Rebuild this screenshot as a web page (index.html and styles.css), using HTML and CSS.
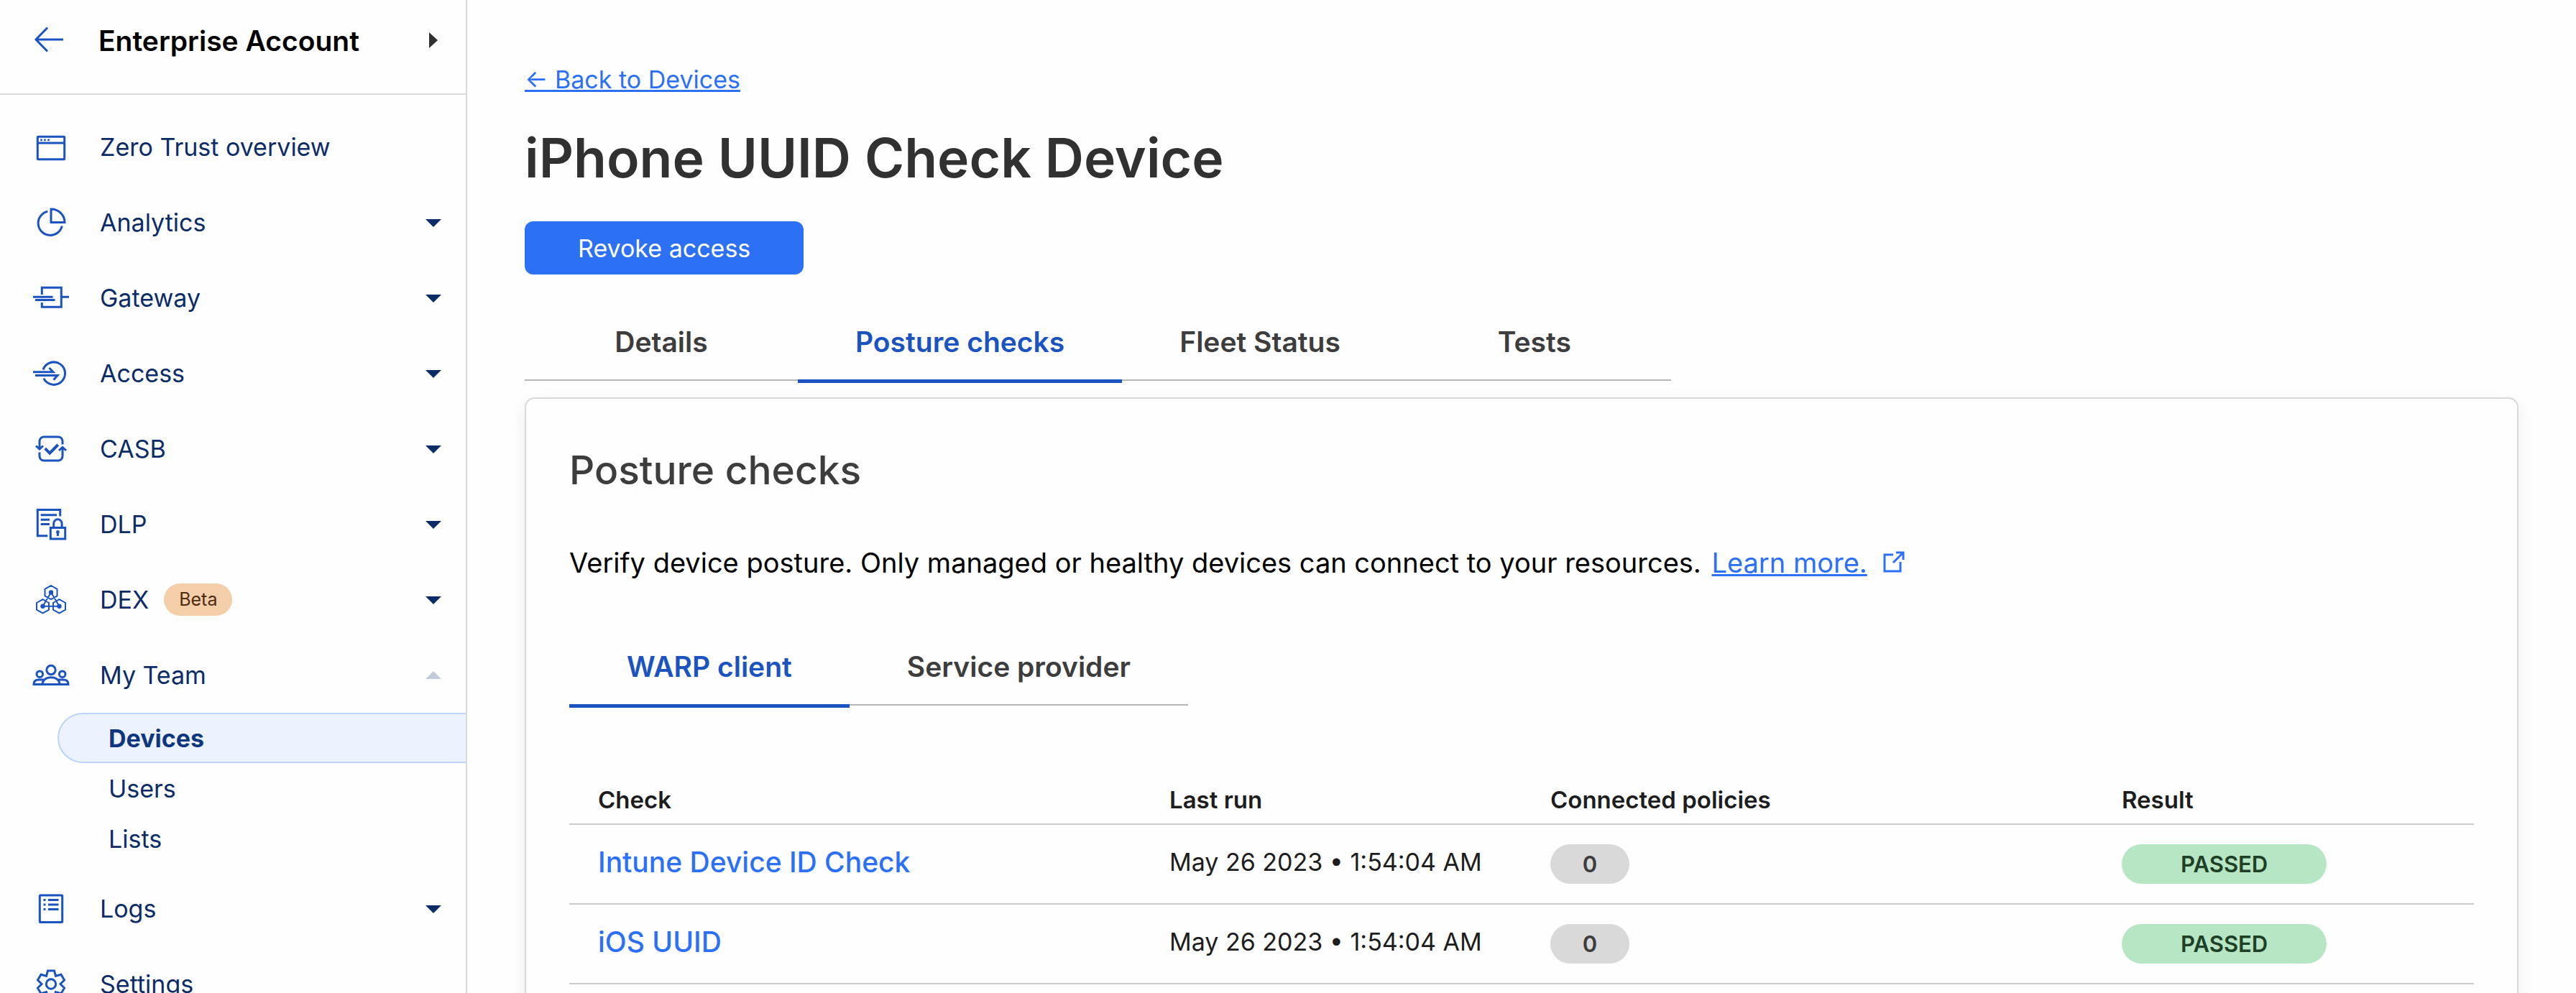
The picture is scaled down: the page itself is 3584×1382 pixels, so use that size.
FILE: index.html
```html
<!DOCTYPE html>
<html lang="en">
<head>
    <meta charset="UTF-8">
    <meta name="viewport" content="width=device-width, initial-scale=1.0">
    <title>iPhone UUID Check Device</title>
    <link rel="stylesheet" href="styles.css">
</head>
<body>
    <div class="app">
        <!-- Sidebar -->
        <aside class="sidebar">
            <div class="account">
                <a href="#" class="account-back" aria-label="Back">
                    <svg class="icon" viewBox="0 0 52 52"><path d="M43 25H5M21 8.500L5 25l16 16.500"/></svg>
                </a>
                <button type="button" class="account-name">
                    <span>Enterprise Account</span>
                    <svg class="caret caret-right" viewBox="0 0 22 22"><path d="M5 0l12 11L5 22z"/></svg>
                </button>
            </div>

            <nav class="menu">
                <a href="#" class="menu-item">
                    <svg class="icon" viewBox="0 0 52 52"><rect x="7.300" y="11.300" width="37.400" height="31.400" rx="1"/><path d="M7 20h38"/><g class="solid"><circle cx="12.500" cy="15.800" r="1.500"/><circle cx="17.500" cy="15.800" r="1.500"/><circle cx="22.500" cy="15.800" r="1.500"/></g></svg>
                    <span>Zero Trust overview</span>
                </a>
                <button type="button" class="menu-item">
                    <svg class="icon" viewBox="0 0 52 52"><path d="M21.300 10.200A16.800 16.800 0 1 0 41.300 30.500"/><path d="M26 7v18.500h19A19 18.500 0 0 0 26 7z"/></svg>
                    <span>Analytics</span>
                    <svg class="caret" viewBox="0 0 22 22"><path d="M0 6h22L11 17z"/></svg>
                </button>
                <button type="button" class="menu-item">
                    <svg class="icon" viewBox="0 0 52 52"><path d="M13.300 21V11.300h27v27h-27V32M1 24.300h27.500M4 28.500h27.500M40.300 24.300H51"/></svg>
                    <span>Gateway</span>
                    <svg class="caret" viewBox="0 0 22 22"><path d="M0 6h22L11 17z"/></svg>
                </button>
                <button type="button" class="menu-item">
                    <svg class="icon" viewBox="0 0 52 52"><path d="M15 20.500A15.700 15.700 0 1 1 15.800 32.700"/><path d="M1 23.800h28L23.500 18M4 28.500h31l-5.500 6.300"/></svg>
                    <span>Access</span>
                    <svg class="caret" viewBox="0 0 22 22"><path d="M0 6h22L11 17z"/></svg>
                </button>
                <button type="button" class="menu-item">
                    <svg class="icon" viewBox="0 0 52 52"><path d="M10 25V15a6 6 0 0 1 6-6h20a6 6 0 0 1 6 6v4.500M5 21.500l5 4.500 5-4.500M10 30.500V36a6 6 0 0 0 6 6h20a6 6 0 0 0 6-6V24.500M37 28l5-4.500 5 4.500"/><path class="thick" d="M17.700 25.200l6.500 6.500L35.700 20"/></svg>
                    <span>CASB</span>
                    <svg class="caret" viewBox="0 0 22 22"><path d="M0 6h22L11 17z"/></svg>
                </button>
                <button type="button" class="menu-item">
                    <svg class="icon" viewBox="0 0 52 52"><path d="M38.700 14.500V5.500H7.300v36.300h14M11.700 12.800H34M11.700 19.200H24M11.700 25.500H24"/><rect x="25.300" y="30.500" width="20.400" height="15.500"/><path d="M29.700 30v-5.500a5.700 5.700 0 0 1 11.400 0V30M35.400 36.500v5.500"/><circle class="solid" cx="35.400" cy="36.500" r="2.400"/></svg>
                    <span>DLP</span>
                    <svg class="caret" viewBox="0 0 22 22"><path d="M0 6h22L11 17z"/></svg>
                </button>
                <button type="button" class="menu-item">
                    <svg class="icon" viewBox="0 0 52 52"><path class="thin" d="M26 6l8.500 4.800v9.600L26 25.200l-8.500-4.800v-9.600zM14.500 25.200l8.500 4.800v9.600l-8.500 4.800L6 39.600V30zM37.500 25.200l8.500 4.800v9.600l-8.500 4.800-8.500-4.800V30zM26 15.500L14.500 34.800h23z"/><g class="solid"><circle cx="26" cy="15.500" r="3.200"/><circle cx="14.500" cy="34.800" r="3.200"/><circle cx="37.500" cy="34.800" r="3.200"/></g></svg>
                    <span>DEX</span>
                    <span class="beta">Beta</span>
                    <svg class="caret" viewBox="0 0 22 22"><path d="M0 6h22L11 17z"/></svg>
                </button>
                <button type="button" class="menu-item" aria-expanded="true">
                    <svg class="icon" viewBox="0 0 52 52"><circle cx="26" cy="18.500" r="6.200"/><circle cx="10.300" cy="24.200" r="4.300"/><circle cx="41.700" cy="24.200" r="4.300"/><path d="M14 38.500c0-6 5-9.800 12-9.800s12 3.800 12 9.800M18 32H9c-4.500 0-7 2.500-7 6.500h48c0-4-2.500-6.500-7-6.500h-9"/></svg>
                    <span>My Team</span>
                    <svg class="caret caret-open" viewBox="0 0 22 22"><path d="M0 16h22L11 5z"/></svg>
                </button>
                <ul class="submenu">
                    <li><a href="#" class="active">Devices</a></li>
                    <li><a href="#">Users</a></li>
                    <li><a href="#">Lists</a></li>
                </ul>
                <button type="button" class="menu-item">
                    <svg class="icon" viewBox="0 0 52 52"><rect x="10.300" y="7" width="31.400" height="37.500" rx="1"/><path d="M22 13.500h14.500M22 20h14.500M22 26.500h14.500M15.500 13.500h3M15.500 20h3M15.500 26.500h3"/></svg>
                    <span>Logs</span>
                    <svg class="caret" viewBox="0 0 22 22"><path d="M0 6h22L11 17z"/></svg>
                </button>
                <a href="#" class="menu-item">
                    <svg class="icon" viewBox="0 0 52 52"><path d="M21.500 7h9l2 7.500 7.500-2.200 4.500 7.800L39 25.500l5.500 5.500-4.500 7.800-7.500-2.200-2 7.400h-9l-2-7.400-7.500 2.200L7.500 31l5.500-5.500-5.500-5.400 4.500-7.800 7.500 2.200z"/><circle cx="26" cy="25.500" r="6.700"/></svg>
                    <span>Settings</span>
                </a>
            </nav>
        </aside>

        <!-- Device page -->
        <main class="main">
            <a href="#" class="back-link">← Back to Devices</a>
            <h1>iPhone UUID Check Device</h1>
            <button type="button" class="revoke">Revoke access</button>

            <div class="tabs" role="tablist">
                <button type="button" role="tab" class="tab">Details</button>
                <button type="button" role="tab" class="tab active" aria-selected="true">Posture checks</button>
                <button type="button" role="tab" class="tab">Fleet Status</button>
                <button type="button" role="tab" class="tab">Tests</button>
            </div>

            <section class="card">
                <h2>Posture checks</h2>
                <p class="intro">
                    Verify device posture. Only managed or healthy devices can connect to your resources.
                    <a href="#">Learn more.</a>
                    <svg class="external" viewBox="0 0 30 30"><path d="M14 5H2v23h22V15M18 2h10v10M28 2L14 16"/></svg>
                </p>

                <div class="tabs tabs-fit" role="tablist">
                    <button type="button" role="tab" class="tab active" aria-selected="true">WARP client</button>
                    <button type="button" role="tab" class="tab">Service provider</button>
                </div>

                <table class="checks">
                    <thead>
                        <tr>
                            <th class="col-check">Check</th>
                            <th class="col-run">Last run</th>
                            <th class="col-policies">Connected policies</th>
                            <th>Result</th>
                        </tr>
                    </thead>
                    <tbody>
                        <tr>
                            <td><a href="#">Intune Device ID Check</a></td>
                            <td>May 26 2023 • 1:54:04 AM</td>
                            <td><span class="pill">0</span></td>
                            <td><span class="pill passed">PASSED</span></td>
                        </tr>
                        <tr>
                            <td><a href="#">iOS UUID</a></td>
                            <td>May 26 2023 • 1:54:04 AM</td>
                            <td><span class="pill">0</span></td>
                            <td><span class="pill passed">PASSED</span></td>
                        </tr>
                    </tbody>
                </table>
            </section>
        </main>
    </div>
</body>
</html>
```
FILE: styles.css
```css
* {
    margin: 0;
    padding: 0;
    box-sizing: border-box;
}

body {
    font-family: Inter, "Liberation Sans", sans-serif;
    font-size: 34px;
    color: #1d1d1d;
    background-color: #fefefe;
}
button {
    font: inherit;
    color: inherit;
    background: none;
    border: none;
    cursor: pointer;
}
a {
    color: #2c70f6;
}

.app {
    display: flex;
    height: 100vh;
    overflow: hidden;
}

/* Sidebar */
.sidebar {
    flex: 0 0 650px;
    border-right: 2px solid #d9d9d9;
    color: #0c2c67;
}
.account {
    display: flex;
    align-items: center;
    height: 132px;
    padding: 0 34px 18px 45px;
    border-bottom: 2px solid #d9d9d9;
}
.account-back {
    display: flex;
}
.account-name {
    flex: 1;
    display: flex;
    align-items: center;
    justify-content: space-between;
    margin-left: 40px;
    font-size: 39px;
    font-weight: 600;
    color: #000;
}
.menu {
    padding-top: 20px;
}
.menu-item {
    display: flex;
    align-items: center;
    width: 100%;
    height: 105px;
    padding: 0 34px 0 45px;
    color: #0c2c67;
    text-decoration: none;
}
.menu-item .icon {
    margin-right: 42px;
}
.icon {
    flex: none;
    width: 52px;
    height: 52px;
    fill: none;
    stroke: #1b53bf;
    stroke-width: 3;
}
.icon .solid {
    fill: #1b53bf;
    stroke: none;
}
.icon .thin {
    stroke-width: 2;
}
.icon .thick {
    stroke-width: 4;
}
.caret {
    width: 22px;
    height: 22px;
    margin-left: auto;
    fill: #0c2c67;
}
.caret-right {
    fill: #313131;
}
.caret-open {
    fill: #c3cad9;
}
.beta {
    margin-left: 21px;
    padding: 0 21px;
    border-radius: 23px;
    background-color: #f4cda9;
    color: #4e2b10;
    font-size: 25px;
    line-height: 45px;
}
.submenu {
    list-style: none;
    padding: 0 0 10px 80px;
}
.submenu a {
    display: block;
    height: 70px;
    padding-left: 69px;
    border: 2px solid transparent;
    border-right: none;
    line-height: 68px;
    color: #0c2c67;
    text-decoration: none;
}
.submenu a.active {
    border-color: #bcd4fb;
    border-radius: 35px 0 0 35px;
    background-color: #ecf3fe;
    color: #0f3780;
    font-weight: 700;
}

/* Main */
.main {
    flex: 1;
    display: flex;
    flex-direction: column;
    align-items: flex-start;
    padding: 88px 80px 0;
}
.main > * {
    flex-shrink: 0;
}
.back-link {
    line-height: 46px;
}
h1 {
    margin: 38px 0 40px;
    font-size: 75px;
    font-weight: 600;
    line-height: 96px;
    color: #313131;
}
.revoke {
    height: 74px;
    padding: 0 74px;
    border-radius: 12px;
    background-color: #2c70f6;
    color: #fff;
}

/* Tabs */
.tabs {
    display: flex;
    margin: 42px 0 23px;
    border-bottom: 2px solid #b6b6b6;
}
.tab {
    min-width: 380px;
    margin-bottom: -5px;
    padding: 26px 80px;
    border-bottom: 5px solid transparent;
    font-size: 39px;
    font-weight: 600;
    line-height: 52px;
    color: #3d3d3d;
}
.tab.active {
    border-color: #1b53bf;
    color: #1b53bf;
}
.tabs-fit {
    width: fit-content;
    margin: 63px 0 98px;
}

/* Card */
.card {
    align-self: stretch;
    padding: 64px 60px;
    border: 2px solid #d9d9d9;
    border-radius: 14px;
    background-color: #fefefe;
    box-shadow: 0 8px 24px rgba(0, 0, 0, 0.07);
}
h2 {
    font-size: 55px;
    font-weight: 500;
    line-height: 70px;
    color: #3d3d3d;
}
.intro {
    margin-top: 64px;
    font-size: 38px;
    line-height: 60px;
    color: #000;
}
.intro a {
    margin-left: 4px;
}
.external {
    width: 30px;
    height: 30px;
    margin-left: 12px;
    fill: none;
    stroke: #2c70f6;
    stroke-width: 3;
}

/* Table */
.checks {
    width: 100%;
    table-layout: fixed;
    border-spacing: 0;
}
.checks th,
.checks td {
    padding: 0 40px;
    border-bottom: 2px solid #cbcbcb;
    text-align: left;
}
.checks th {
    height: 68px;
    font-size: 33px;
    font-weight: 600;
}
.checks td {
    height: 111px;
    padding-bottom: 6px;
}
.checks td a {
    font-size: 39px;
    font-weight: 500;
    text-decoration: none;
}
.col-check,
.col-policies {
    width: 30%;
}
.col-run {
    width: 20%;
}
.pill {
    display: inline-block;
    min-width: 110px;
    margin-top: 6px;
    padding: 0 44px;
    border-radius: 28px;
    background-color: #d9d9d9;
    color: #3d3d3d;
    font-size: 31px;
    font-weight: 600;
    line-height: 55px;
    text-align: center;
}
.passed {
    padding: 0 82px;
    background-color: #b7e6c5;
    color: #1d4026;
}
```
